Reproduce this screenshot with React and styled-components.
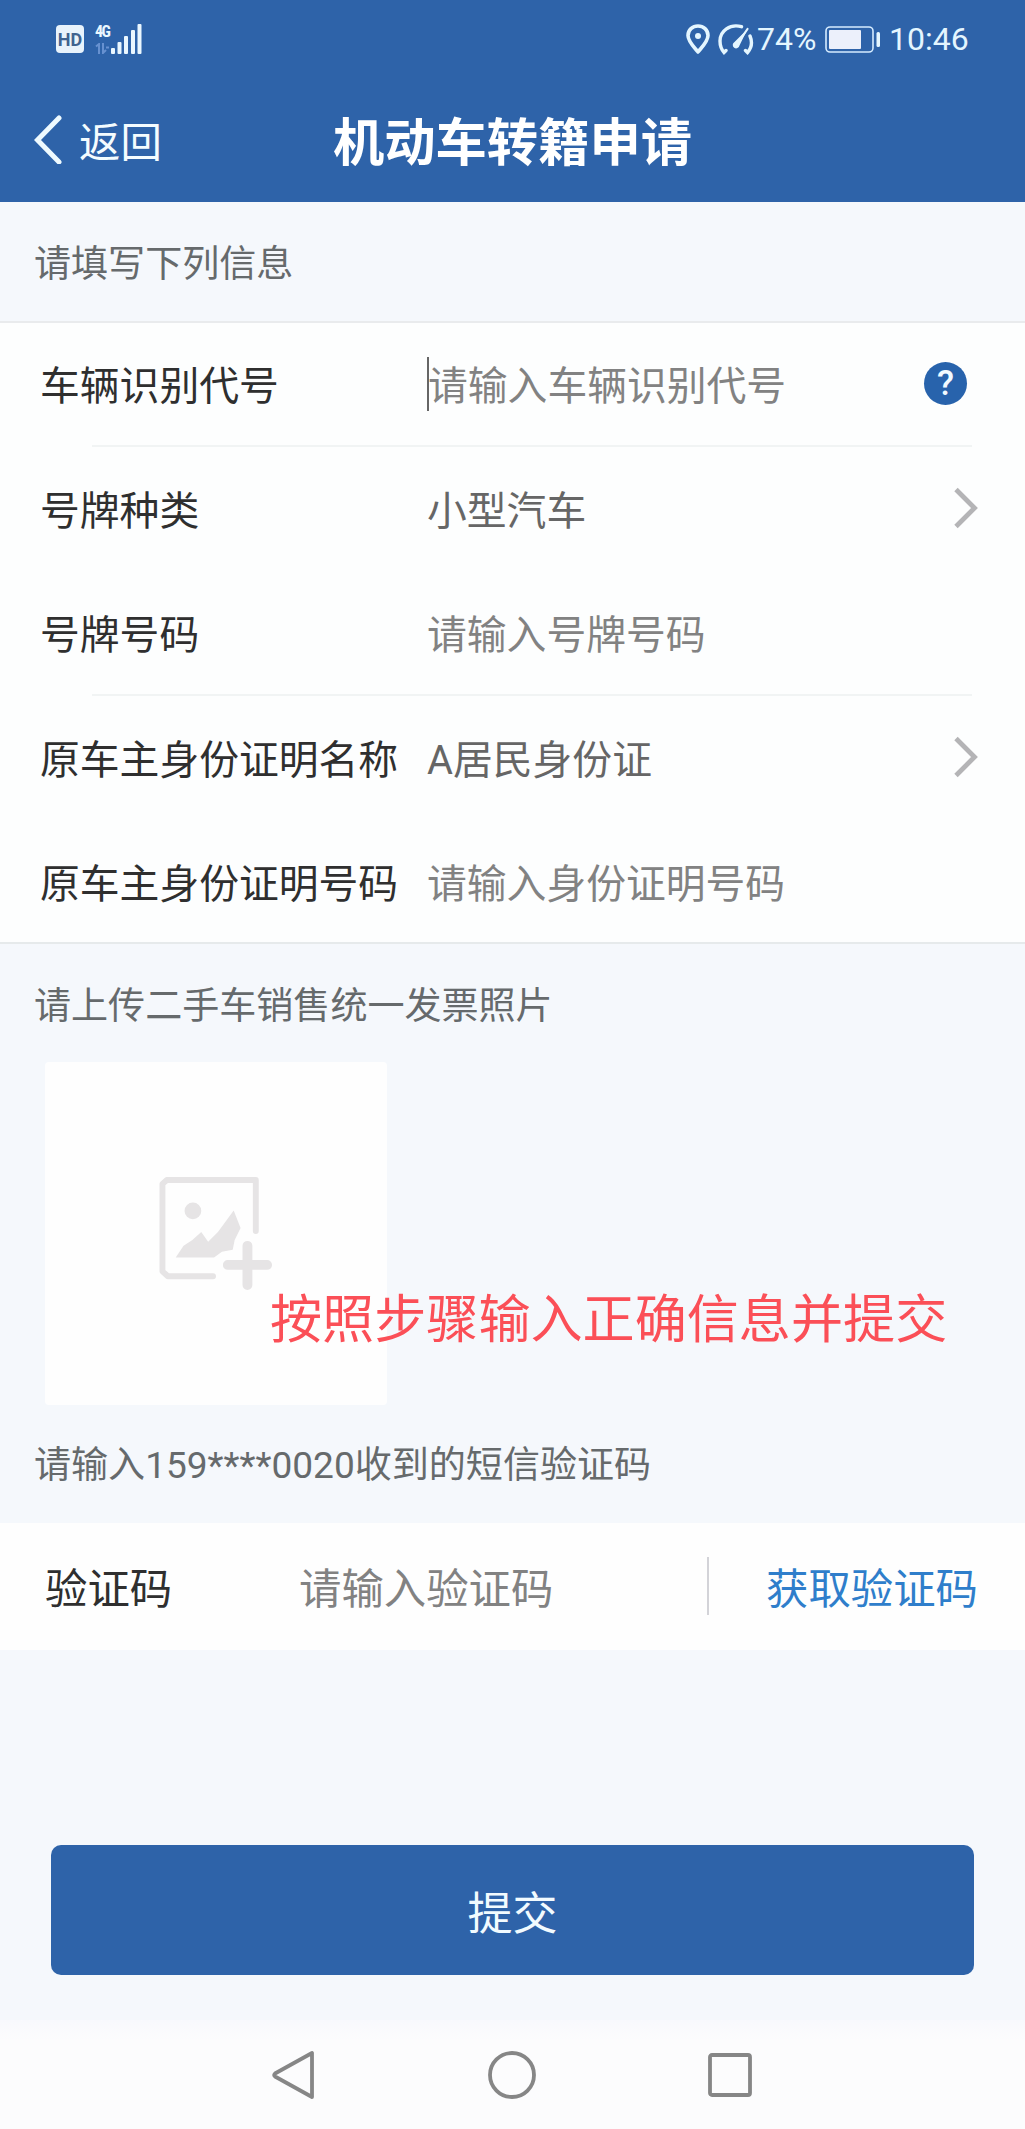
import React from "react";
import styled, { createGlobalStyle } from "styled-components";

const GlobalStyle = createGlobalStyle`
  * {
    box-sizing: border-box;
  }

  body {
    margin: 0;
    background: #f5f8fc;
    font-family: "Noto Sans CJK SC", sans-serif;
  }
`;

const fields = [
  { label: "车辆识别代号", text: "请输入车辆识别代号", cursor: true, help: true, line: true },
  { label: "号牌种类", text: "小型汽车", filled: true, arrow: true },
  { label: "号牌号码", text: "请输入号牌号码", line: true },
  { label: "原车主身份证明名称", text: "A居民身份证", filled: true, arrow: true, latin: true },
  { label: "原车主身份证明号码", text: "请输入身份证明号码" },
];

function StatusBar() {
  return (
    <Status>
      <HdBadge>HD</HdBadge>
      <Network>
        <span>4G</span>
        <svg width="14" height="11" viewBox="0 0 14 11" fill="none" stroke="#6791d0" strokeWidth="2">
          <path d="M1 3.5L4 1V11M8 0V10L11 7" />
          <path d="M11 4.5H14" />
        </svg>
      </Network>
      <svg width="32" height="30" viewBox="0 0 32 30" fill="#eaf7ff">
        <rect x="0" y="24" width="4" height="6" rx="1" />
        <rect x="6.5" y="18" width="4" height="12" rx="1" />
        <rect x="13" y="12" width="4" height="18" rx="1" />
        <rect x="20" y="6" width="4" height="24" rx="1" />
        <rect x="26.5" y="0" width="4" height="30" rx="1" />
      </svg>
      <StatusRight>
        <svg width="24" height="31" viewBox="0 0 24 31" fill="none">
          <path
            d="M12 28C8.500 23.500 2 17.500 2 11.500C2 6 6.500 2 12 2C17.500 2 22 6 22 11.500C22 17.500 15.500 23.500 12 28Z"
            stroke="#e4f6ff"
            strokeWidth="3.600"
            strokeLinejoin="round"
          />
          <circle cx="12" cy="12" r="3" fill="#e4f6ff" />
        </svg>
        <Gauge width="36" height="31" viewBox="0 0 36 31" fill="none" stroke="#e4f6ff" strokeLinecap="round">
          <path d="M23.500 2.700C12 -0.500 2 7 2 17C2 21.500 3.500 25.500 6 28.500L8 26.500" strokeWidth="3.400" />
          <path d="M32 12C34.500 18 33.500 24 29.500 28.500L27.500 26.500" strokeWidth="3.400" />
          <path d="M29.500 5L20 19" strokeWidth="2.200" />
          <path d="M29.500 5L21.500 21.500A3.400 3.400 0 1 1 16.500 18Z" fill="#e4f6ff" stroke="none" />
        </Gauge>
        <Percent>74%</Percent>
        <svg width="56" height="27" viewBox="0 0 56 27" fill="none">
          <rect x="1" y="1" width="47" height="25" rx="4" stroke="#d5ebff" strokeWidth="1.600" />
          <rect x="4" y="4" width="32" height="19" rx="1" fill="#ecf0fb" />
          <rect x="51.500" y="6" width="3.500" height="15" rx="1.500" fill="#e4f6ff" />
        </svg>
        <Time>10:46</Time>
      </StatusRight>
    </Status>
  );
}

function Field({ label, text, cursor, help, line, filled, arrow, latin }) {
  return (
    <Row>
      <RowBody>
        <Label>{label}</Label>
        {cursor && <Cursor />}
        <Value $filled={filled} $latin={latin}>
          {text}
        </Value>
        {help && <Help>?</Help>}
        {arrow && (
          <Arrow width="24" height="44" viewBox="0 0 24 44" fill="none">
            <path d="M2 3.500L20.500 22L2 40.500" stroke="#b4b4b6" strokeWidth="4.800" />
          </Arrow>
        )}
      </RowBody>
      {line && <Line />}
    </Row>
  );
}

function App() {
  return (
    <Page>
      <GlobalStyle />
      <Header>
        <StatusBar />
        <TitleBar>
          <Back>
            <svg width="28" height="50" viewBox="0 0 28 50" fill="none">
              <path d="M25 4L3.500 26L25 48" stroke="#eefaff" strokeWidth="5" strokeLinecap="round" />
            </svg>
            返回
          </Back>
          <Title>机动车转籍申请</Title>
          <span />
        </TitleBar>
      </Header>

      <Hint $height={119}>请填写下列信息</Hint>
      <Form>
        {fields.map((f) => (
          <Field key={f.label} {...f} />
        ))}
      </Form>

      <Hint $height={118}>请上传二手车销售统一发票照片</Hint>
      <Upload>
        <svg width="116" height="116" viewBox="0 0 116 116" fill="none">
          <path d="M98.500 55V3H8L3.500 7V96L9 101H55" stroke="#e6e4e5" strokeWidth="6" strokeLinejoin="round" strokeLinecap="round" />
          <circle cx="34.500" cy="34.500" r="8.500" fill="#e6e4e5" />
          <path
            d="M17 82L25 70L34 64L43 56L50 66L60 56L76 34L83 52L77 64L75 74L64 76L56 82Z"
            fill="#e6e4e5"
          />
          <path d="M90 70V110M70 89.500H110" stroke="#e6e4e5" strokeWidth="10" strokeLinecap="round" />
        </svg>
        <Notice>按照步骤输入正确信息并提交</Notice>
      </Upload>

      <Hint $height={118} $latin>
        请输入159****0020收到的短信验证码
      </Hint>
      <CodeRow>
        <CodeLabel>验证码</CodeLabel>
        <CodeInput>请输入验证码</CodeInput>
        <Divider />
        <CodeLink>获取验证码</CodeLink>
      </CodeRow>

      <Submit>提交</Submit>

      <NavBar>
        <svg width="44" height="50" viewBox="0 0 44 50">
          <path d="M40 3V47L3 26.500Q1.500 25 3 23.500Z" />
        </svg>
        <svg width="50" height="50" viewBox="0 0 50 50">
          <circle cx="25" cy="25" r="22" />
        </svg>
        <svg width="46" height="46" viewBox="0 0 46 46">
          <rect x="3" y="3" width="40" height="40" rx="2" />
        </svg>
      </NavBar>
    </Page>
  );
}

export default App;

const Page = styled.div`
  display: flex;
  flex-direction: column;
  width: 1025px;
  height: 2129px;
  overflow: hidden;
  background: #f5f8fc;
`;

const Header = styled.header`
  height: 202px;
  background: #2e63a9;
`;

const Status = styled.div`
  display: flex;
  align-items: center;
  height: 78px;
  padding: 0 57px 0 56px;
`;

const HdBadge = styled.span`
  width: 28px;
  height: 28px;
  margin-right: 11px;
  border-radius: 4px;
  background: #e8f3fc;
  color: #3f6390;
  font: bold 18px/29px Roboto, sans-serif;
  text-align: center;
`;

const Network = styled.span`
  display: flex;
  flex-direction: column;
  width: 16px;
  height: 30px;
  color: #eaf7ff;

  span {
    height: 19px;
    font: bold 16px/15px "Roboto Condensed", Roboto, sans-serif;
    letter-spacing: -1.5px;
  }
`;

const StatusRight = styled.div`
  display: flex;
  align-items: center;
  margin-left: auto;
  color: #e4f6ff;
  font-family: Roboto, sans-serif;
  font-size: 32px;
  line-height: 40px;
`;

const Gauge = styled.svg`
  margin-left: 8px;
`;

const Percent = styled.span`
  width: 71px;
  padding-left: 3px;
`;

const Time = styled.span`
  width: 79px;
  margin-left: 8px;
`;

const TitleBar = styled.div`
  display: grid;
  grid-template-columns: 1fr auto 1fr;
  align-items: center;
  height: 121px;
  color: #fff;
`;

const Back = styled.div`
  display: flex;
  align-items: center;
  gap: 17px;
  padding-left: 34px;
  color: #f4fcff;
  font-size: 41.4px;
  line-height: 50px;
`;

const Title = styled.h1`
  margin: 0;
  font-size: 51.3px;
  font-weight: 700;
  line-height: 60px;
`;

const Hint = styled.p`
  flex: none;
  height: ${(p) => p.$height}px;
  margin: 0;
  padding-left: 34px;
  color: #666a6c;
  font-family: ${(p) => (p.$latin ? 'Roboto, "Noto Sans CJK SC"' : '"Noto Sans CJK SC"')}, sans-serif;
  font-size: 37.05px;
  line-height: ${(p) => (p.$latin ? 122 : 119)}px;
`;

const Form = styled.section`
  flex: none;
  height: 623px;
  border-top: 2px solid #e9ebed;
  border-bottom: 2px solid #e6eaeb;
  background: #fdfefe;
`;

const Row = styled.div`
  display: flex;
  flex-direction: column;
  height: 124.3px;
`;

const RowBody = styled.div`
  display: flex;
  flex: 1;
  align-items: center;
  padding: 0 47px 2px 40px;
  font-size: 39.8px;
  line-height: 60px;
`;

const Line = styled.div`
  height: 2px;
  margin: 0 53px 0 92px;
  background: #f1f4f4;
`;

const Label = styled.span`
  width: 387px;
  color: #2f2f2f;
  white-space: nowrap;
`;

const Cursor = styled.i`
  width: 2px;
  height: 54px;
  margin: 2px -1px 0 0;
  background: #666;
`;

const Value = styled.span`
  flex: 1;
  padding-top: ${(p) => (p.$latin ? "7px" : 0)};
  color: ${(p) => (p.$filled ? "#666" : "#828282")};
  font-family: ${(p) => (p.$latin ? 'Roboto, "Noto Sans CJK SC"' : '"Noto Sans CJK SC"')}, sans-serif;
`;

const Help = styled.span`
  width: 43px;
  height: 43px;
  margin-right: 11px;
  border-radius: 50%;
  background: #2863ac;
  color: #f2faff;
  font: 500 35px/43px Roboto, sans-serif;
  text-align: center;
`;

const Arrow = styled.svg`
  flex: none;
`;

const Upload = styled.div`
  position: relative;
  display: flex;
  flex: none;
  width: 342px;
  height: 343px;
  margin-left: 45px;
  padding: 114px;
  border-radius: 4px;
  background: #fefefe;
`;

/* red caption laid over the upload box, runs out past its right edge */
const Notice = styled.span`
  position: absolute;
  top: 221px;
  left: 225px;
  color: #fb4f57;
  font-size: 52.1px;
  line-height: 66px;
  white-space: nowrap;
`;

const CodeRow = styled.div`
  display: flex;
  flex: none;
  align-items: center;
  height: 127px;
  padding: 0 0 2px 45px;
  background: #fefefe;
  font-size: 42.4px;
  line-height: 60px;
`;

const CodeLabel = styled.span`
  width: 254px;
  color: #2f2f2f;
`;

const CodeInput = styled.span`
  width: 408px;
  color: #828282;
`;

const Divider = styled.i`
  width: 2px;
  height: 58px;
  background: #d3d3d8;
`;

const CodeLink = styled.span`
  margin-left: 57px;
  color: #2f7ecb;
`;

const Submit = styled.button`
  flex: none;
  height: 130px;
  margin: 195px 51px 0;
  padding: 0;
  border: 0;
  border-radius: 10px;
  background: #2e63a9;
  color: #f2fbff;
  font-family: inherit;
  font-size: 45px;
  line-height: 131px;
`;

const NavBar = styled.nav`
  display: flex;
  flex: 1;
  align-items: center;
  justify-content: space-between;
  margin-top: 45px;
  padding: 0 272px;
  background: linear-gradient(#f8f9fd, #fcfcfd 20px);

  svg {
    fill: none;
    stroke: #868686;
    stroke-width: 3.8px;
    stroke-linejoin: round;
  }
`;
